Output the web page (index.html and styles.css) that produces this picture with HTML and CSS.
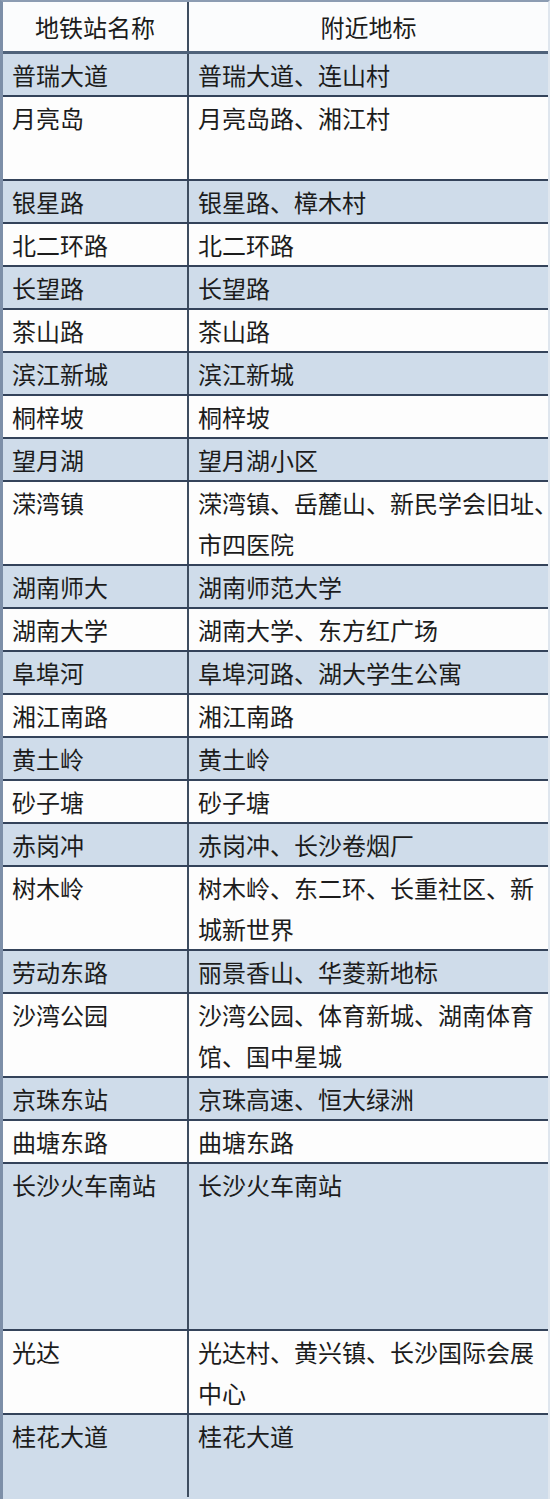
FILE: index.html
```html
<!DOCTYPE html>
<html lang="zh-CN">
<head>
<meta charset="utf-8">
<title>地铁站名称</title>
<link rel="stylesheet" href="styles.css">
</head>
<body>
<div class="frame">
<table class="metro">
  <thead>
    <tr><th class="c1">地铁站名称</th><th class="c2">附近地标</th></tr>
  </thead>
  <tbody>
    <tr class="b"><td>普瑞大道</td><td>普瑞大道、连山村</td></tr>
    <tr class="w l2"><td>月亮岛</td><td>月亮岛路、湘江村</td></tr>
    <tr class="b"><td>银星路</td><td>银星路、樟木村</td></tr>
    <tr class="w"><td>北二环路</td><td>北二环路</td></tr>
    <tr class="b"><td>长望路</td><td>长望路</td></tr>
    <tr class="w"><td>茶山路</td><td>茶山路</td></tr>
    <tr class="b"><td>滨江新城</td><td>滨江新城</td></tr>
    <tr class="w"><td>桐梓坡</td><td>桐梓坡</td></tr>
    <tr class="b"><td>望月湖</td><td>望月湖小区</td></tr>
    <tr class="w"><td>溁湾镇</td><td>溁湾镇、岳麓山、新民学会旧址<span class="hang">、</span>市四医院</td></tr>
    <tr class="b"><td>湖南师大</td><td>湖南师范大学</td></tr>
    <tr class="w"><td>湖南大学</td><td>湖南大学、东方红广场</td></tr>
    <tr class="b"><td>阜埠河</td><td>阜埠河路、湖大学生公寓</td></tr>
    <tr class="w"><td>湘江南路</td><td>湘江南路</td></tr>
    <tr class="b"><td>黄土岭</td><td>黄土岭</td></tr>
    <tr class="w"><td>砂子塘</td><td>砂子塘</td></tr>
    <tr class="b"><td>赤岗冲</td><td>赤岗冲、长沙卷烟厂</td></tr>
    <tr class="w"><td>树木岭</td><td>树木岭、东二环、长重社区、新城新世界</td></tr>
    <tr class="b"><td>劳动东路</td><td>丽景香山、华菱新地标</td></tr>
    <tr class="w"><td>沙湾公园</td><td>沙湾公园、体育新城、湖南体育馆、国中星城</td></tr>
    <tr class="b"><td>京珠东站</td><td>京珠高速、恒大绿洲</td></tr>
    <tr class="w"><td>曲塘东路</td><td>曲塘东路</td></tr>
    <tr class="b l4"><td>长沙火车南站</td><td>长沙火车南站</td></tr>
    <tr class="w l2"><td>光达</td><td>光达村、黄兴镇、长沙国际会展中心</td></tr>
    <tr class="b l2 last"><td>桂花大道</td><td>桂花大道</td></tr>
  </tbody>
</table>
</div>
</body>
</html>
```

FILE: styles.css
```css
html, body {
  margin: 0;
  padding: 0;
  background: #ffffff;
}

.frame {
  width: 550px;
  height: 1499px;
  overflow: hidden;
  box-sizing: border-box;
  border-left: 3px solid #7d8fa8;
  border-top: 2px solid #8c9cb2;
  border-right: 2px solid #dfe6ee;
  background: #cfdcea;
}

.metro {
  width: 545px;
  border-collapse: collapse;
  table-layout: fixed;
  font-family: "Noto Sans CJK SC", "Noto Sans", sans-serif;
  font-size: 24px;
  color: #1c1c1c;
}

.metro th {
  height: 49px;
  padding: 0;
  font-weight: 400;
  text-align: center;
  vertical-align: middle;
  background: #fbfcfd;
  border-bottom: 3px solid #4f627a;
  line-height: 49px;
}

.metro .c1 {
  width: 184px;
  border-right: 2px solid #3e4d60;
}

.metro td {
  padding: 0 0 0 9px;
  line-height: 41px;
  height: 41px;
  vertical-align: top;
  border-bottom: 2px solid #34435a;
}

.metro td:first-child {
  border-right: 2px solid #3e4d60;
}

.metro .b td {
  background: #cfdcea;
}

.metro .w td {
  background: #fdfdfd;
}

.metro .l2 td {
  height: 82px;
}

.metro .l4 td {
  height: 165px;
}

.metro .last td {
  border-bottom: none;
}

/* compressed (half-width) punctuation at a line end */
.hang {
  display: inline-block;
  width: 8px;
  white-space: nowrap;
  font-feature-settings: "halt";
  letter-spacing: -4px;
}
```
